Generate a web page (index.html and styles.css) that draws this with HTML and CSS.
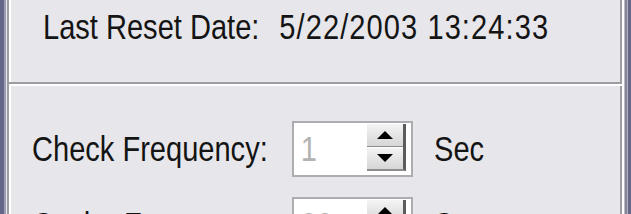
FILE: index.html
```html
<!DOCTYPE html>
<html lang="en">
<head>
<meta charset="utf-8">
<title>Settings</title>
<link rel="stylesheet" href="styles.css">
</head>
<body>
<div class="window">
  <div class="frame-left"></div>
  <div class="panel">
    <div class="info">
      <span class="info-text"><span class="info-label">Last Reset Date:</span><span class="info-date">5/22/2003 13:24:33</span></span>
    </div>
    <div class="sep"></div>
    <div class="settings">
      <div class="row">
        <span class="row-label">Check Frequency:</span>
        <div class="spin">
          <span class="spin-value">1</span>
          <div class="spin-buttons">
            <div class="spin-btn up"><svg width="16" height="8" viewBox="0 0 16 8"><polygon points="8,0 16,8 0,8" fill="#000"/></svg></div>
            <div class="spin-btn down"><svg width="16" height="8" viewBox="0 0 16 8"><polygon points="0,0 16,0 8,8" fill="#000"/></svg></div>
          </div>
        </div>
        <span class="unit">Sec</span>
      </div>
      <div class="row">
        <span class="row-label">Cache Frequency:</span>
        <div class="spin">
          <span class="spin-value">30</span>
          <div class="spin-buttons">
            <div class="spin-btn up"><svg width="16" height="8" viewBox="0 0 16 8"><polygon points="8,0 16,8 0,8" fill="#000"/></svg></div>
            <div class="spin-btn down"><svg width="16" height="8" viewBox="0 0 16 8"><polygon points="0,0 16,0 8,8" fill="#000"/></svg></div>
          </div>
        </div>
        <span class="unit">Sec</span>
      </div>
    </div>
  </div>
  <div class="frame-right"></div>
</div>
</body>
</html>
```
FILE: styles.css
```css
html, body {
  margin: 0;
  height: 100%;
  overflow: hidden;
}
body {
  background: #e7e7eb;
  font-family: "Liberation Sans", Arial, sans-serif;
  color: #141414;
}
.window {
  display: flex;
  height: 214px;
}
.frame-left {
  width: 6px;
  flex: none;
  background: linear-gradient(to right, #66668a 0 4px, #9d9db0 4px 6px);
}
.frame-right {
  width: 7px;
  flex: none;
  background: linear-gradient(to right, #bdbdc6 0 1px, #85859a 1px 3px, #b4b4c0 3px 4px, #66668a 4px);
}
.panel {
  flex: 1;
  min-width: 0;
  margin-left: 1px;
  border-left: 2px solid #9c9ca3;
  border-right: 2px solid #fff;
  box-shadow: inset 2px 0 #fff, inset -2px 0 #9c9ca3;
}
.info {
  height: 36px;
  padding: 9px 0 0 34px;
  font-size: 35px;
  line-height: 36px;
  white-space: nowrap;
}
.info-text {
  display: inline-block;
  transform: scaleX(0.83);
  transform-origin: left center;
}
.info-date {
  margin-left: 24px;
  letter-spacing: 1.3px;
}
.sep {
  margin-top: 37px;
  border-top: 2px solid #9c9ca3;
  border-bottom: 2px solid #fff;
}
.settings {
  padding: 35px 0 0 23px;
}
.row {
  display: flex;
  align-items: center;
  height: 56px;
  font-size: 35px;
  line-height: 36px;
  white-space: nowrap;
}
.row + .row {
  margin-top: 20px;
}
.row-label {
  width: 260px;
  flex: none;
  transform: scaleX(0.83);
  transform-origin: left center;
}
.spin {
  width: 121px;
  height: 56px;
  flex: none;
  box-sizing: border-box;
  border: 2px solid #adadb1;
  background: #fff;
  display: flex;
}
.spin-value {
  flex: 1;
  color: #b3b3b3;
  padding-left: 8px;
  line-height: 52px;
  transform: scaleX(0.83);
  transform-origin: left center;
}
.spin-buttons {
  width: 39px;
  margin: 1px 5px 4px 0;
  box-sizing: border-box;
  display: flex;
  flex-direction: column;
  border-right: 3px solid #5c5c5c;
  border-bottom: 2px solid #8e8e8e;
}
.spin-btn {
  flex: 1;
  display: flex;
  align-items: center;
  justify-content: center;
  background: linear-gradient(#f4f4f4, #d6d6d6);
}
.spin-btn.up {
  border-bottom: 1px solid #8a8a8a;
}
.spin-btn.down {
  border-top: 1px solid #fff;
}
.unit {
  margin-left: 21px;
  transform: scaleX(0.83);
  transform-origin: left center;
}
```
